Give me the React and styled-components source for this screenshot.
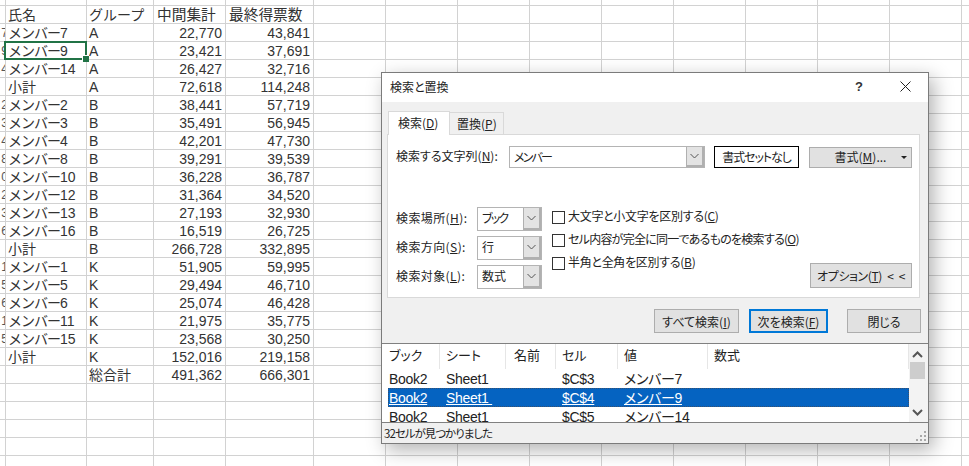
import React from 'react'
import styled, { createGlobalStyle } from 'styled-components'

const rows = [
    ['', '氏名', 'グループ', '中間集計', '最終得票数', true],
    ['7', 'メンバー7', 'A', '22,770', '43,841'],
    ['9', 'メンバー9', 'A', '23,421', '37,691'],
    ['4', 'メンバー14', 'A', '26,427', '32,716'],
    ['', '小計', 'A', '72,618', '114,248'],
    ['2', 'メンバー2', 'B', '38,441', '57,719'],
    ['3', 'メンバー3', 'B', '35,491', '56,945'],
    ['4', 'メンバー4', 'B', '42,201', '47,730'],
    ['8', 'メンバー8', 'B', '39,291', '39,539'],
    ['0', 'メンバー10', 'B', '36,228', '36,787'],
    ['2', 'メンバー12', 'B', '31,364', '34,520'],
    ['3', 'メンバー13', 'B', '27,193', '32,930'],
    ['6', 'メンバー16', 'B', '16,519', '26,725'],
    ['', '小計', 'B', '266,728', '332,895'],
    ['1', 'メンバー1', 'K', '51,905', '59,995'],
    ['5', 'メンバー5', 'K', '29,494', '46,710'],
    ['6', 'メンバー6', 'K', '25,074', '46,428'],
    ['1', 'メンバー11', 'K', '21,975', '35,775'],
    ['5', 'メンバー15', 'K', '23,568', '30,250'],
    ['', '小計', 'K', '152,016', '219,158'],
    ['', '', '総合計', '491,362', '666,301'],
]

const results = [
    ['Book2', 'Sheet1', '', '$C$3', 'メンバー7', ''],
    ['Book2', 'Sheet1 ', '', '$C$4', 'メンバー9', ''],
    ['Book2', 'Sheet1', '', '$C$5', 'メンバー14', ''],
]

const Chevron = () => (
    <svg width="9" height="6" viewBox="0 0 9 6">
        <path d="M0.5 1 L4.5 5 L8.5 1" fill="none" stroke="#555" strokeWidth="1" />
    </svg>
)

const Combo = ({ value, wide, tight }) => (
    <ComboBox $wide={wide}>
        <ComboText $tight={tight}>{value}</ComboText>
        <ComboButton><Chevron /></ComboButton>
    </ComboBox>
)

// the katakana part of a member name runs narrower than its number
const Name = ({ text }) => {
    if (!text.startsWith('メンバー')) return text
    return <><Kana>メンバー</Kana>{text.slice(4)}</>
}

const App = () => {
    return (
        <>
            <GlobalStyle />
            <Page>
                <Sheet>
                    {Array.from({ length: 15 }).map((_, i) => <Cell key={`top${i}`} />)}
                    {rows.map((r, i) => (
                        <React.Fragment key={i}>
                            <RowHead><span>{r[0]}</span></RowHead>
                            {i === 2
                                ? <ActiveCell><Name text={r[1]} /></ActiveCell>
                                : <TextCell><Name text={r[1]} /></TextCell>}
                            <TextCell>{r[2]}</TextCell>
                            {r[5] ? <HeadingCell>{r[3]}</HeadingCell> : <NumCell>{r[3]}</NumCell>}
                            {r[5] ? <HeadingCell>{r[4]}</HeadingCell> : <NumCell>{r[4]}</NumCell>}
                            {Array.from({ length: 10 }).map((_, c) => <Cell key={c} />)}
                        </React.Fragment>
                    ))}
                    {Array.from({ length: 75 }).map((_, i) => <Cell key={`end${i}`} />)}
                </Sheet>

                <Dialog>
                    <TitleBar>
                        <Title>検索と置換</Title>
                        <HelpMark>?</HelpMark>
                        <CloseMark width="11" height="11" viewBox="0 0 11 11">
                            <path d="M0.5 0.5 L10.5 10.5 M10.5 0.5 L0.5 10.5" stroke="#222" strokeWidth="1" />
                        </CloseMark>
                    </TitleBar>

                    <Tabs>
                        <Tab $active>検索(<u>D</u>)</Tab>
                        <Tab>置換(<u>P</u>)</Tab>
                    </Tabs>

                    <Panel>
                        <SearchRow>
                            <SearchLabel>検索する文字列(<u>N</u>):</SearchLabel>
                            <Combo value="メンバー" wide tight />
                            <NoFormatButton>書式セットなし</NoFormatButton>
                            <FormatButton>
                                <span>書式(<u>M</u>)...</span>
                                <Caret />
                            </FormatButton>
                        </SearchRow>
                        <OptionsRow>
                            <Fields>
                                <Field><FieldLabel>検索場所(<u>H</u>):</FieldLabel><Combo value="ブック" tight /></Field>
                                <Field><FieldLabel>検索方向(<u>S</u>):</FieldLabel><Combo value="行" /></Field>
                                <Field><FieldLabel>検索対象(<u>L</u>):</FieldLabel><Combo value="数式" /></Field>
                            </Fields>
                            <Checks>
                                <Check><CheckBox />大文字と小文字を区別する(<u>C</u>)</Check>
                                <Check $tight><CheckBox />セル内容が完全に同一であるものを検索する(<u>O</u>)</Check>
                                <Check><CheckBox />半角と全角を区別する(<u>B</u>)</Check>
                            </Checks>
                            <OptionButton><span>オプション(<u>T</u>) &lt; &lt;</span></OptionButton>
                        </OptionsRow>
                    </Panel>

                    <Actions>
                        <ActionButton $width="85px">すべて検索(<u>I</u>)</ActionButton>
                        <ActionButton $width="79px" $primary>次を検索(<u>F</u>)</ActionButton>
                        <ActionButton $width="74px" $last>閉じる</ActionButton>
                    </Actions>

                    <ResultList>
                        <ResultArea>
                            <ResultHead>
                                <HeadCell>ブック</HeadCell>
                                <HeadCell>シート</HeadCell>
                                <HeadCell>名前</HeadCell>
                                <HeadCell>セル</HeadCell>
                                <HeadCell>値</HeadCell>
                                <HeadCell>数式</HeadCell>
                            </ResultHead>
                            {results.map((r, i) => (
                                <ResultRow key={i} $selected={i === 1}>
                                    {r.map((v, c) => <ResultCell key={c}><span>{v}</span></ResultCell>)}
                                </ResultRow>
                            ))}
                        </ResultArea>
                        <ScrollBar>
                            <ScrollArrow width="11" height="7" viewBox="0 0 11 7">
                                <path d="M1 6 L5.5 1.5 L10 6" fill="none" stroke="#555" strokeWidth="2" />
                            </ScrollArrow>
                            <ScrollThumb />
                            <ScrollArrow width="11" height="7" viewBox="0 0 11 7">
                                <path d="M1 1 L5.5 5.5 L10 1" fill="none" stroke="#555" strokeWidth="2" />
                            </ScrollArrow>
                        </ScrollBar>
                    </ResultList>

                    <StatusBar>
                        32セルが見つかりました
                        <Grip width="12" height="12" viewBox="0 0 12 12">
                            <path d="M9 1h2v2H9zM5 5h2v2H5zM9 5h2v2H9zM1 9h2v2H1zM5 9h2v2H5zM9 9h2v2H9z" fill="#a8a8a8" />
                        </Grip>
                    </StatusBar>
                </Dialog>
            </Page>
        </>
    )
}

export default App

const uiFont = `"Noto Sans CJK JP", sans-serif`
const sheetFont = `"Liberation Sans", "Noto Sans CJK JP", sans-serif`

const GlobalStyle = createGlobalStyle`
html, body {
    margin: 0;
    padding: 0;
    background: #fff;
}
* {
    box-sizing: border-box;
}
`

const Page = styled.div`
position: relative;
width: 969px;
height: 466px;
overflow: hidden;
background: #fff;
font-family: ${sheetFont};
`

const Sheet = styled.div`
display: grid;
grid-template-columns: 6px 81px 67px 72px 88px repeat(10, 72px);
grid-template-rows: 6px;
grid-auto-rows: 18px;
width: 1035px;
font-size: 14px;
color: #333;
`

const Cell = styled.div`
border-right: 1px solid #d2d2d2;
border-bottom: 1px solid #d2d2d2;
line-height: 19px;
white-space: nowrap;
`

const RowHead = styled(Cell)`
display: flex;
justify-content: flex-end;
overflow: hidden;
font-size: 12px;
color: #555;
span {
    margin-right: -3px;
}
`

const TextCell = styled(Cell)`
padding-left: 2px;
`

const Kana = styled.span`
letter-spacing: -1px;
`

const HeadingCell = styled(Cell)`
padding-left: 3px;
font-size: 14.7px;
`

const NumCell = styled(Cell)`
text-align: right;
padding-right: 3px;
`

const ActiveCell = styled(TextCell)`
position: relative;
&::before {
    content: "";
    position: absolute;
    left: -2px;
    top: -1px;
    right: -1px;
    bottom: -1px;
    border: 2px solid #217346;
}
&::after {
    content: "";
    position: absolute;
    right: -3px;
    bottom: -3px;
    width: 6px;
    height: 6px;
    background: #217346;
    border-left: 1px solid #fff;
    border-top: 1px solid #fff;
}
`

const Dialog = styled.div`
position: absolute;
left: 381px;
top: 72px;
width: 548px;
height: 372px;
display: flex;
flex-direction: column;
background: #f0f0f0;
border: 1px solid #7b7b7b;
box-shadow: 5px 6px 18px rgba(0, 0, 0, 0.3);
font-family: ${uiFont};
font-size: 12px;
color: #222;
font-feature-settings: "palt";
`

const TitleBar = styled.div`
display: flex;
align-items: center;
height: 29px;
flex-shrink: 0;
padding: 0 17px 2px 8px;
background: #fff;
`

const Title = styled.div`
flex: 1;
`

const HelpMark = styled.div`
margin-right: 37px;
font-family: ${sheetFont};
font-size: 13px;
font-weight: bold;
color: #333;
`

const CloseMark = styled.svg`
display: block;
`

const Tabs = styled.div`
display: flex;
align-items: flex-end;
height: 24px;
margin: 9px 0 0 6px;
position: relative;
z-index: 1;
`

const Tab = styled.div`
height: ${props => (props.$active ? '24px' : '23px')};
width: ${props => (props.$active ? '62px' : '54px')};
padding-left: ${props => (props.$active ? '9px' : '7px')};
line-height: 21px;
background: ${props => (props.$active ? '#fff' : '#f0f0f0')};
border: 1px solid #d9d9d9;
border-bottom: ${props => (props.$active ? 'none' : '1px solid #d9d9d9')};
border-left-width: ${props => (props.$active ? '1px' : '0')};
`

const Panel = styled.div`
height: 164px;
margin: -1px 8px 0 5px;
padding: 11px 8px 0;
background: #fff;
border: 1px solid #d9d9d9;
`

const SearchRow = styled.div`
display: flex;
align-items: center;
height: 22px;
`

const SearchLabel = styled.div`
width: 113px;
flex-shrink: 0;
padding-bottom: 3px;
`

const ComboBox = styled.div`
display: flex;
flex-shrink: 0;
width: ${props => (props.$wide ? '196px' : '65px')};
height: ${props => (props.$wide ? '22px' : '24px')};
background: #fff;
border: 1px solid #b4b4b4;
`

const ComboText = styled.div`
flex: 1;
padding-left: 4px;
line-height: 19px;
letter-spacing: ${props => (props.$tight ? '-1.8px' : '0')};
`

const ComboButton = styled.div`
display: flex;
align-items: center;
justify-content: center;
width: 18px;
background: #e3e3e3;
border: solid #b0b0b0;
border-width: 0 2px 2px 1px;
`

const PlainButton = styled.div`
display: flex;
align-items: center;
justify-content: center;
flex-shrink: 0;
background: #e1e1e1;
border: 1px solid #adadad;
`

const NoFormatButton = styled(PlainButton)`
width: 85px;
height: 22px;
margin-left: 9px;
padding-bottom: 2px;
background: #fff;
border-color: #000;
letter-spacing: -1.1px;
`

const FormatButton = styled(PlainButton)`
position: relative;
width: 103px;
height: 21px;
margin-left: 10px;
padding-bottom: 2px;
`

const Caret = styled.i`
position: absolute;
right: 4px;
top: 8px;
border-left: 3px solid transparent;
border-right: 3px solid transparent;
border-top: 3px solid #222;
`

const OptionsRow = styled.div`
display: flex;
margin-top: 39px;
`

const Fields = styled.div`
display: flex;
flex-direction: column;
gap: 5px;
flex-shrink: 0;
`

const Field = styled.div`
display: flex;
align-items: center;
`

const FieldLabel = styled.div`
width: 81px;
padding-bottom: 4px;
letter-spacing: 0.4px;
`

const Checks = styled.div`
display: flex;
flex-direction: column;
gap: 5px;
margin: 1px 0 0 10px;
`

const Check = styled.div`
display: flex;
align-items: center;
height: 18px;
padding-bottom: 4px;
white-space: nowrap;
letter-spacing: ${props => (props.$tight ? '-0.75px' : '-0.3px')};
`

const CheckBox = styled.i`
width: 13px;
height: 13px;
margin: 4px 3px 0 0;
background: #fff;
border: 1px solid #333;
`

const OptionButton = styled(PlainButton)`
width: 102px;
height: 25px;
margin: auto -1px 1px auto;
padding-bottom: 1px;
align-self: flex-end;
letter-spacing: -0.4px;
word-spacing: 3px;
white-space: nowrap;
`

const Actions = styled.div`
display: flex;
flex-shrink: 0;
justify-content: flex-end;
gap: 10px;
margin-top: 11px;
padding-right: 7px;
`

const ActionButton = styled(PlainButton)`
width: ${props => props.$width};
height: 24px;
margin-left: ${props => (props.$last ? '9px' : '0')};
border: ${props => (props.$primary ? '2px solid #0078d7' : '1px solid #adadad')};
`

const ResultList = styled.div`
display: flex;
flex-shrink: 0;
height: 80px;
margin-top: 10px;
overflow: hidden;
background: #fff;
border-top: 1px solid #808080;
border-bottom: 1px solid #808080;
`

const ResultArea = styled.div`
flex: 1;
padding-left: 6px;
min-width: 0;
`

const ResultHead = styled.div`
display: grid;
grid-template-columns: 52px 66px 50px 62px 90px 1fr;
height: 25px;
font-size: 13px;
`

const HeadCell = styled.div`
padding-left: 6px;
line-height: 22px;
border-right: 1px solid #e6e6e6;
&:first-child {
    padding-left: 1px;
}
&:nth-child(3) {
    padding-left: 8px;
}
`

const ResultRow = styled.div`
display: grid;
grid-template-columns: 52px 66px 50px 62px 90px 1fr;
height: 19px;
line-height: 20px;
font-family: ${sheetFont};
font-size: 14px;
color: ${props => (props.$selected ? '#fff' : '#222')};
background: ${props => (props.$selected ? '#0563c1' : 'transparent')};
outline: ${props => (props.$selected ? '1px dotted #38506e' : 'none')};
outline-offset: -1px;
span {
    text-decoration: ${props => (props.$selected ? 'underline' : 'none')};
    white-space: pre;
}
`

const ResultCell = styled.div`
padding-left: 6px;
letter-spacing: -0.3px;
&:first-child {
    padding-left: 1px;
}
`

const ScrollBar = styled.div`
display: flex;
flex-direction: column;
align-items: center;
width: 19px;
flex-shrink: 0;
padding: 7px 3px 6px 0;
background: #f3f3f3;
`

const ScrollArrow = styled.svg`
display: block;
flex-shrink: 0;
&:last-child {
    margin-top: auto;
}
`

const ScrollThumb = styled.div`
width: 15px;
height: 17px;
margin-top: 4px;
background: #cdcdcd;
`

const StatusBar = styled.div`
position: relative;
flex: 1;
padding-left: 2px;
line-height: 20px;
font-size: 11.5px;
letter-spacing: -1px;
`

const Grip = styled.svg`
position: absolute;
right: 1px;
bottom: 1px;
`
